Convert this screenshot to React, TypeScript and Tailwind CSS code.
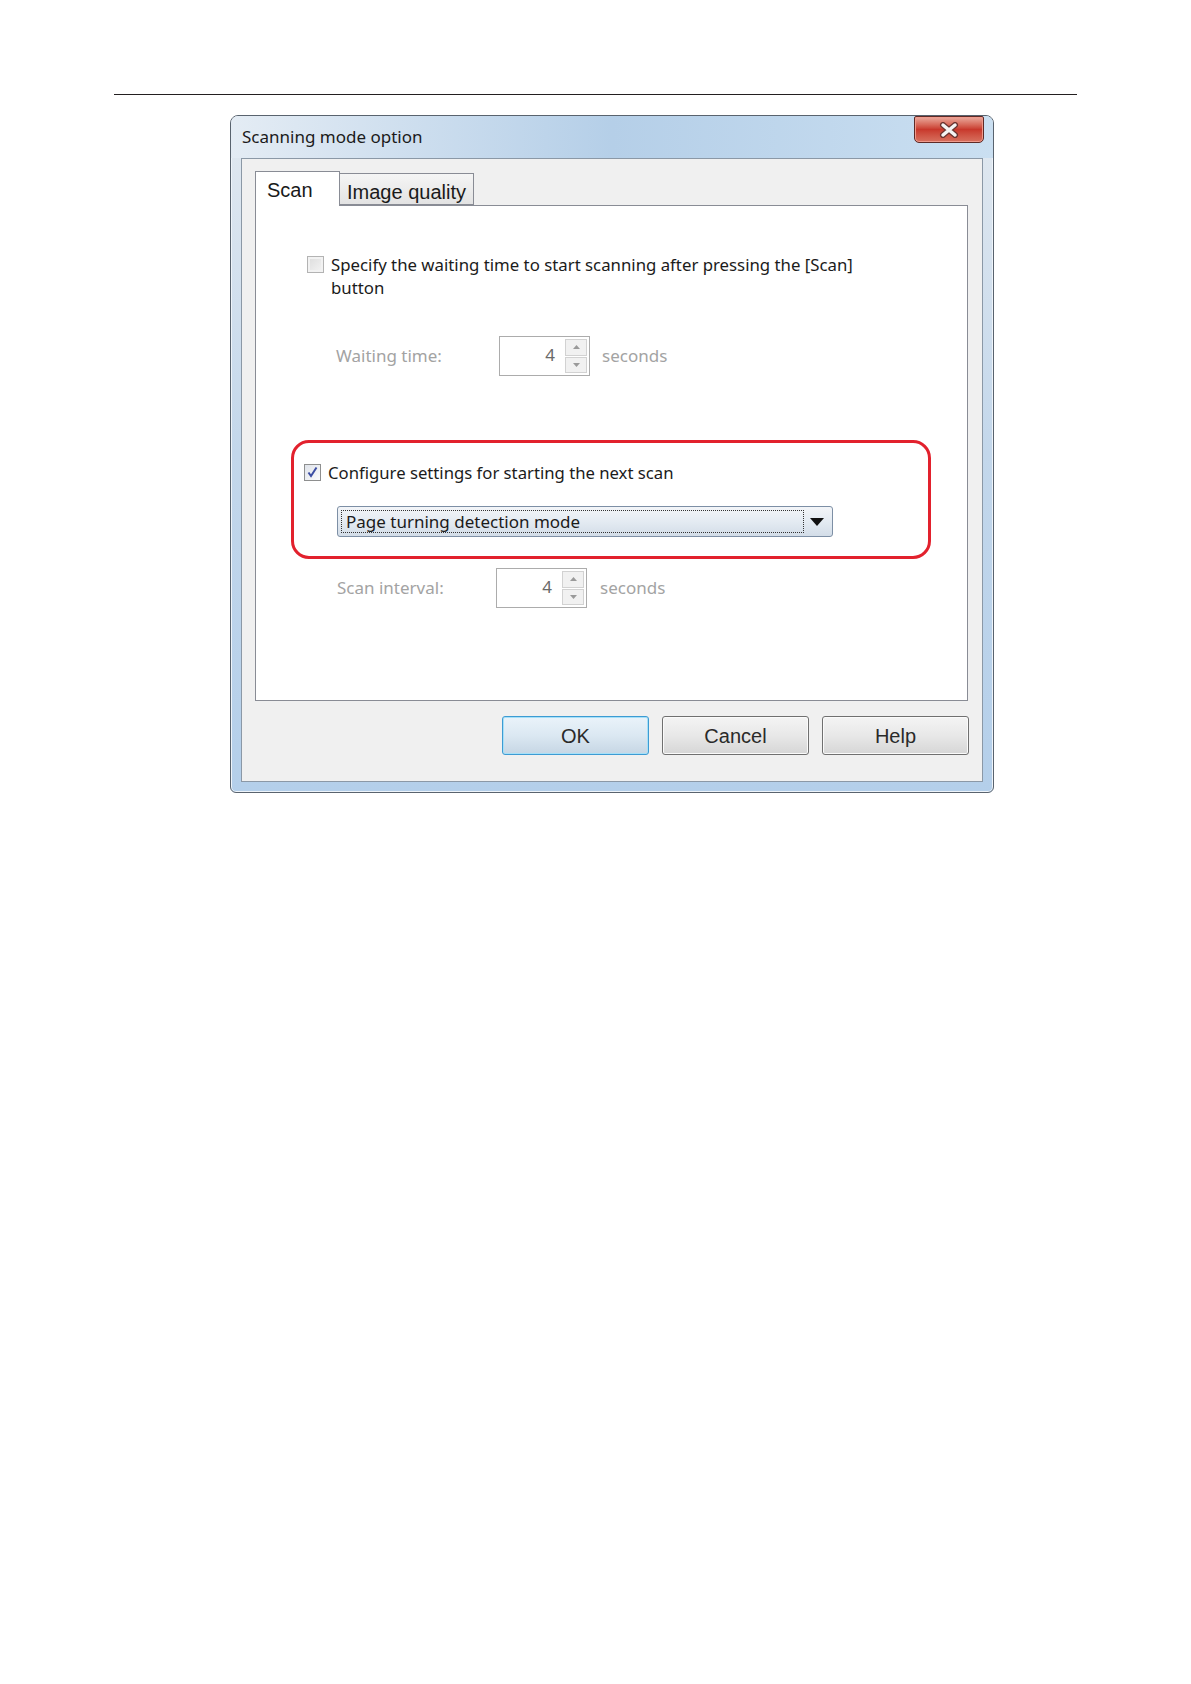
import React from 'react'

const ui = "font-['Noto_Sans',sans-serif]"
const classic = "font-['Liberation_Sans',Arial,sans-serif]"

function Arrow({ up }: { up?: boolean }) {
  return (
    <svg width="7" height="4" viewBox="0 0 7 4">
      <path d={up ? 'M0 4 L3.5 0 L7 4 Z' : 'M0 0 L3.5 4 L7 0 Z'} fill="#9a9a9a" />
    </svg>
  )
}

function Spinner() {
  return (
    <div className="flex h-[40px] w-[91px] border border-[#acacac] bg-white">
      <div className={`flex flex-1 items-start justify-end pr-[10px] pt-[5px] text-[17px] text-[#6a6a6a] ${ui}`}>4</div>
      <div className="my-[2px] mr-[2px] flex w-[22px] flex-col gap-[1px]">
        <div className="flex flex-1 items-center justify-center border border-[#d2d2d2] bg-[#f1f1f1]">
          <Arrow up />
        </div>
        <div className="flex flex-1 items-center justify-center border border-[#d2d2d2] bg-[#f1f1f1]">
          <Arrow />
        </div>
      </div>
    </div>
  )
}

function Btn({ label, primary }: { label: string; primary?: boolean }) {
  return (
    <div
      className={`flex h-[39px] w-[147px] items-center justify-center rounded-[3px] border bg-gradient-to-b text-[20px] text-[#2a2a2a] ${classic} ${
        primary
          ? 'border-[#3d9bd3] from-[#eaf3fa] via-[#dbe8f2] to-[#c6d6e4] shadow-[inset_0_0_0_1px_#a6e0f8]'
          : 'border-[#707070] from-[#f4f4f4] via-[#e8e8e8] to-[#d6d6d6] shadow-[inset_0_0_0_1px_#fbfbfb]'
      }`}
    >
      {label}
    </div>
  )
}

export default function App() {
  return (
    <div className="min-h-[1684px] w-[1191px] bg-white pt-[94px]">
      <div className="ml-[114px] w-[963px] border-t border-[#231f20]" />

      <div className="ml-[230px] mt-[20px] flex h-[678px] w-[764px] flex-col rounded-t-[8px] rounded-b-[6px] border border-[#59636e] bg-gradient-to-b from-[#e2e9f0] via-[#c3d7eb] to-[#b4cfea] shadow-[inset_0_0_0_1px_#eef4fa]">
        {/* title bar */}
        <div className="flex h-[42px] shrink-0 items-start justify-between rounded-t-[7px] bg-gradient-to-r from-[#e4ecf4] via-[#b5cfe8] to-[#cadff1] pl-[11px] pr-[9px]">
          <span className={`mt-[8px] text-[17px] text-[#1b1b1b] ${ui}`}>Scanning mode option</span>
          <div className="flex h-[27px] w-[70px] items-center justify-center rounded-b-[5px] rounded-t-[2px] border border-[#5e2a26] bg-gradient-to-b from-[#e9aa9e] via-[#c8382c] to-[#d7705f] shadow-[inset_0_0_0_1px_#ef9a8c]">
            <svg width="22" height="16" viewBox="0 0 22 16">
              <path d="M5 3 L17 13 M17 3 L5 13" stroke="#6a3430" strokeWidth="6" strokeLinecap="round" />
              <path d="M5 3 L17 13 M17 3 L5 13" stroke="#f4f4f4" strokeWidth="3.5" strokeLinecap="round" />
            </svg>
          </div>
        </div>

        {/* client area */}
        <div className="mx-[10px] mb-[10px] flex flex-1 flex-col border border-[#8b98a6] bg-[#f0f0f0] pl-[13px] pr-[14px] pt-[12px]">
          {/* tabs */}
          <div className="flex items-end">
            <div className={`relative -mb-px flex h-[35px] w-[85px] items-start border border-b-0 border-[#898c95] bg-white pl-[11px] pt-[3px] text-[20px] text-[#1a1a1a] ${classic} z-10`}>
              Scan
            </div>
            <div className={`flex h-[32px] w-[134px] items-start border border-l-0 border-[#898c95] bg-gradient-to-b from-[#f5f5f5] to-[#e3e3e3] pl-[7px] pt-[3px] text-[20px] text-[#1a1a1a] ${classic}`}>
              Image quality
            </div>
          </div>

          {/* panel */}
          <div className={`flex h-[496px] flex-col border border-[#898c95] bg-white ${ui}`}>
            <div className="ml-[51px] mt-[47px] flex items-start gap-[7px]">
              <div className="mt-[3px] h-[17px] w-[17px] shrink-0 border border-[#b3b3b3] bg-gradient-to-br from-[#dcdcdc] to-[#f4f4f4] shadow-[inset_0_0_0_2px_#f2f2f2]" />
              <div className="w-[560px] text-[16.8px] leading-[23px] text-[#1b1b1b]">
                Specify the waiting time to start scanning after pressing the [Scan] button
              </div>
            </div>

            <div className="ml-[80px] mt-[37px] flex items-center">
              <span className="w-[163px] text-[17px] text-[#a3a3a3]">Waiting time:</span>
              <Spinner />
              <span className="ml-[12px] text-[17px] text-[#a3a3a3]">seconds</span>
            </div>

            <div className="ml-[35px] mt-[64px] h-[119px] w-[640px] rounded-[18px] border-[3px] border-[#e2212d] pl-[10px] pt-[18px]">
              <div className="flex items-center gap-[7px]">
                <div className="flex h-[17px] w-[17px] items-center justify-center border border-[#8e8f8f] bg-gradient-to-br from-[#dfe3ea] to-[#fbfbfb]">
                  <svg width="13" height="13" viewBox="0 0 13 13">
                    <path d="M2.5 6.5 L5 10 L10.5 1.5" stroke="#3c4ea3" strokeWidth="2" fill="none" />
                  </svg>
                </div>
                <span className="text-[16.7px] leading-[23px] text-[#1b1b1b]">Configure settings for starting the next scan</span>
              </div>
              <div className="ml-[33px] mt-[22px] flex h-[31px] w-[496px] items-center rounded-[3px] border border-[#7d8fa5] bg-gradient-to-b from-[#f3f5f8] via-[#e4ebf2] to-[#d3dde8] pl-[3px] pr-[8px]">
                <div className="flex h-[23px] w-[463px] items-center border border-dotted border-[#333] pl-[4px] text-[17px] text-[#1b1b1b]">
                  Page turning detection mode
                </div>
                <div className="flex flex-1 items-center justify-end">
                  <svg width="14" height="8" viewBox="0 0 14 8">
                    <path d="M0 0 L14 0 L7 8 Z" fill="#111" />
                  </svg>
                </div>
              </div>
            </div>

            <div className="ml-[81px] mt-[9px] flex items-center">
              <span className="w-[159px] text-[17px] text-[#a3a3a3]">Scan interval:</span>
              <Spinner />
              <span className="ml-[13px] text-[17px] text-[#a3a3a3]">seconds</span>
            </div>
          </div>

          {/* buttons */}
          <div className="-mr-[1px] mt-[15px] flex justify-end gap-[13px]">
            <Btn label="OK" primary />
            <Btn label="Cancel" />
            <Btn label="Help" />
          </div>
        </div>
      </div>
    </div>
  )
}
